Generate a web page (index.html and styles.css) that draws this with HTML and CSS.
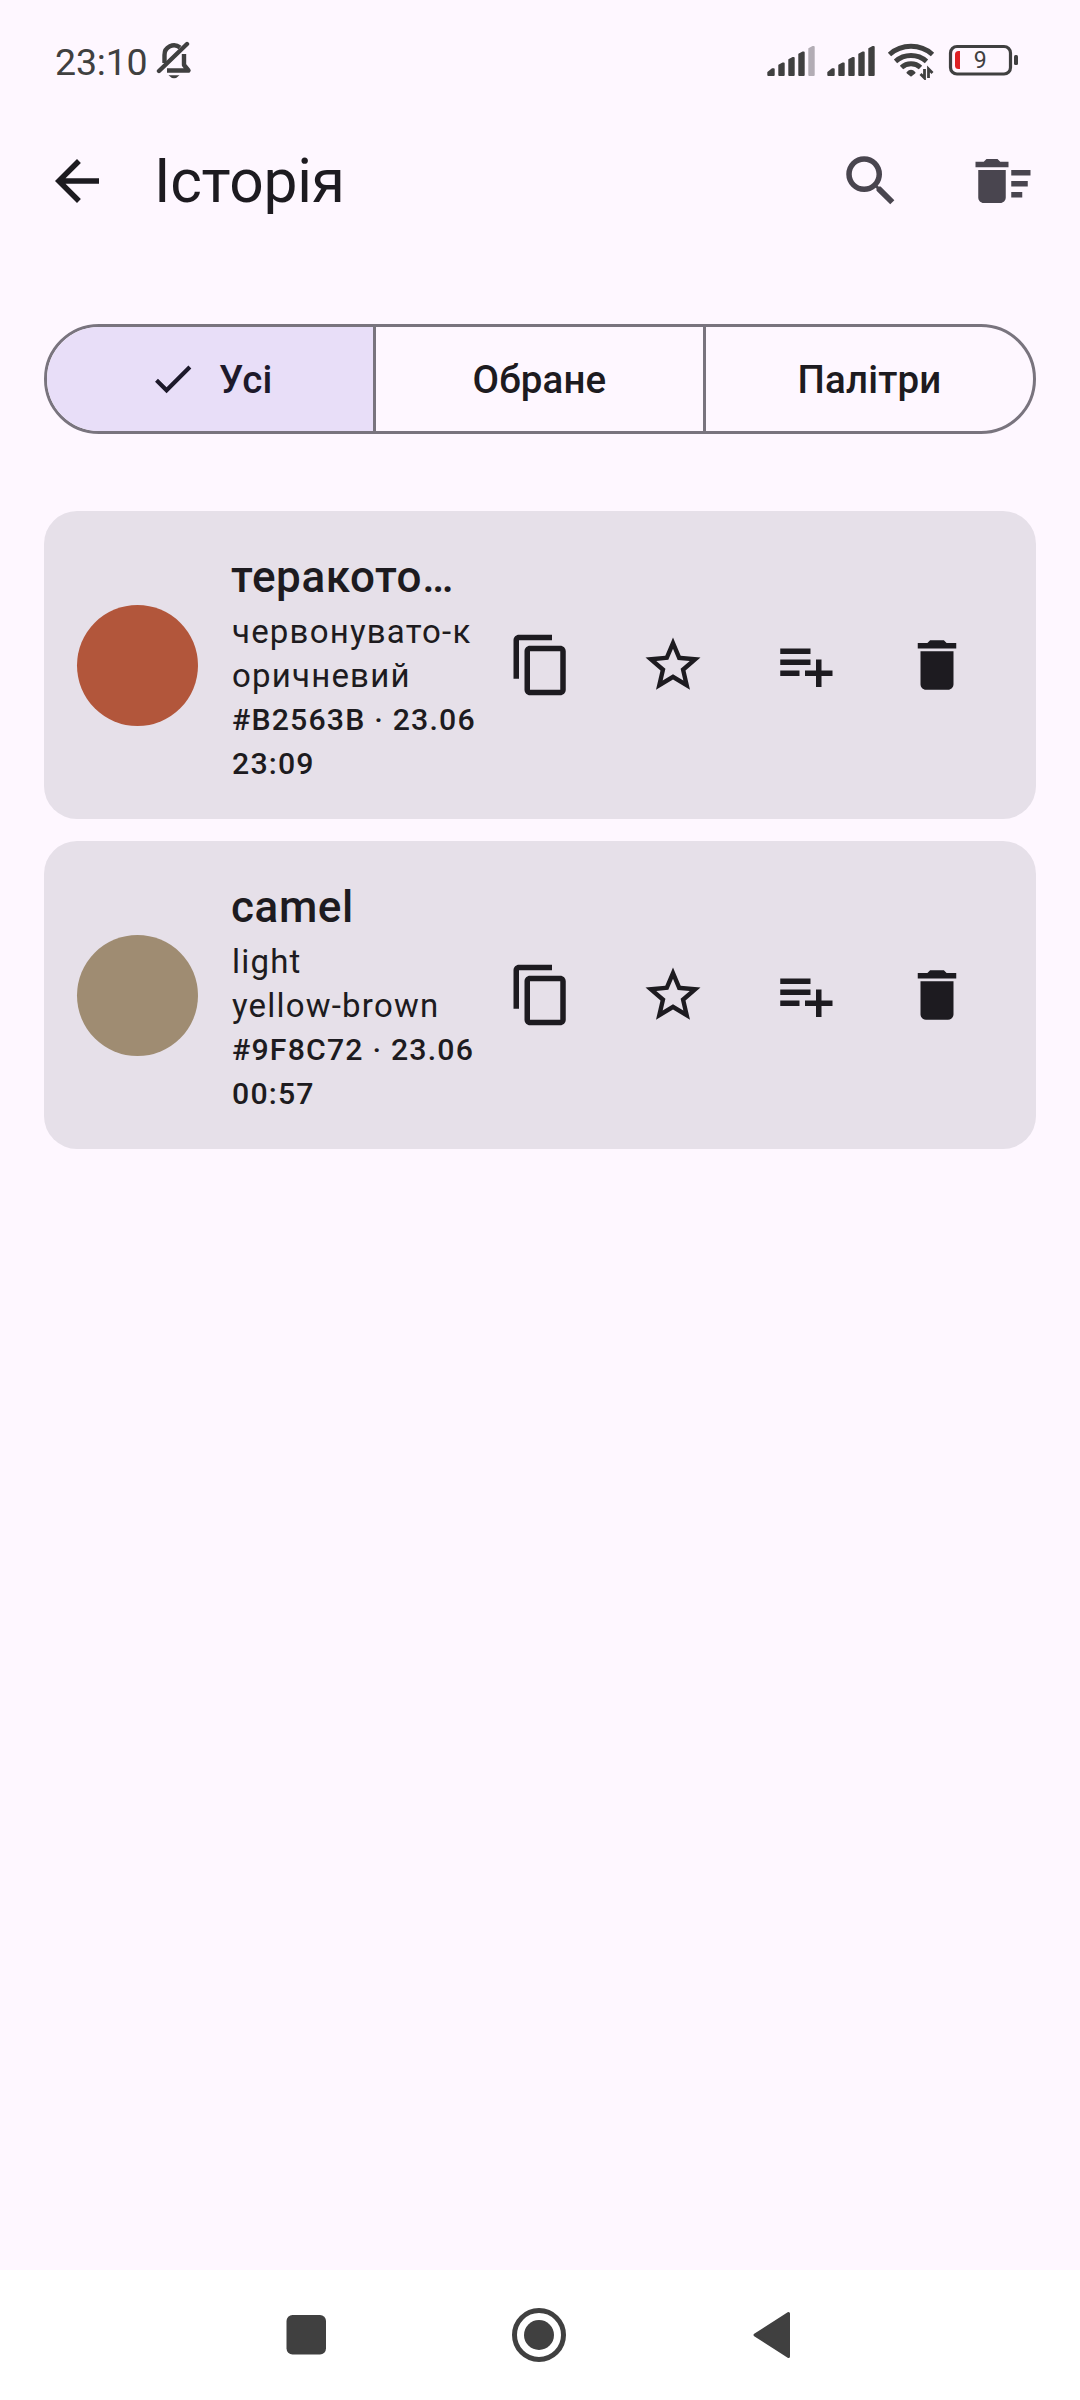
FILE: index.html
```html
<!DOCTYPE html>
<html lang="uk">
<head>
<meta charset="utf-8">
<title>Історія</title>
<link rel="stylesheet" href="styles.css">
</head>
<body>
<svg class="sprite" aria-hidden="true">
  <symbol id="copy" viewBox="0 0 24 24"><path d="M16 1H4c-1.1 0-2 .9-2 2v14h2V3h12V1zm3 4H8c-1.1 0-2 .9-2 2v14c0 1.1.9 2 2 2h11c1.1 0 2-.9 2-2V7c0-1.1-.9-2-2-2zm0 16H8V7h11v14z"/></symbol>
  <symbol id="star" viewBox="0 0 24 24"><path d="M22 9.24l-7.19-.62L12 2 9.19 8.63 2 9.24l5.46 4.73L5.82 21 12 17.27 18.18 21l-1.63-7.03L22 9.24zM12 15.4l-3.76 2.27 1-4.28-3.32-2.88 4.38-.38L12 6.1l1.71 4.04 4.38.38-3.32 2.88 1 4.28L12 15.4z"/></symbol>
  <symbol id="playlist" viewBox="0 0 24 24"><path d="M14 10H3v2h11v-2zm0-4H3v2h11V6zm4 8v-4h-2v4h-4v2h4v4h2v-4h4v-2h-4zM3 16h7v-2H3v2z"/></symbol>
  <symbol id="delete" viewBox="0 0 24 24"><path d="M6 19c0 1.1.9 2 2 2h8c1.1 0 2-.9 2-2V7H6v12zM19 4h-3.500l-1-1h-5l-1 1H5v2h14V4z"/></symbol>
</svg>
<div class="screen">
  <div class="status">
    <span class="clock">23:10</span>
    <svg class="bell" width="36" height="38" viewBox="0 0 36 38"><g fill="none" stroke="#404040" stroke-width="4.400"><path d="M8.500 22V14a9.500 9.500 0 0 1 15.500-7.500"/><path d="M28 13v11l4.500 5.500H11" stroke-linejoin="round"/><path d="M3 30L31 3" stroke-linecap="round"/></g><path d="M12.500 34.300h11q-5.500 6-11 0z" fill="#404040"/></svg>
    <svg class="tray" width="254" height="40" viewBox="766 40 254 40">
      <g fill="#404040" stroke="#404040" stroke-width="2" stroke-linejoin="round">
        <path d="M768.300 75v-2.500l4-3.200h1.400v5.700zM779.300 75V65.300l3.700-1.900h.7V75zM789.300 75V59.800l3.700-1.900h.7V75zM799.300 75V54.300l3.700-1.900h.7V75z"/>
        <path d="M828.300 75v-2.500l4-3.200h1.400v5.700zM839.300 75V65.300l3.700-1.900h.7V75zM849.300 75V59.800l3.700-1.900h.7V75zM859.300 75V54.300l3.700-1.900h.7V75zM869.300 75V48.800l3.700-1.900h.7V75z"/>
        <path d="M911 75.500l-3.500-2.800q3.500-4 7 0z"/>
      </g>
      <path d="M809.300 75V48.800l3.700-1.900h.7V75z" fill="#b3adb5" stroke="#b3adb5" stroke-width="2" stroke-linejoin="round"/>
      <g fill="none" stroke="#404040" stroke-width="5">
        <path d="M889.500 54.500A32.500 32.500 0 0 1 932.500 54.500M895.500 61.300A23.500 23.500 0 0 1 926.500 61.300M901.500 67.500A14 14 0 0 1 920.500 67.500"/>
        <path d="M924.500 69v9l-4-4M928.500 78v-9l4 4" stroke-width="2.800"/>
        <rect x="950.500" y="46.500" width="60" height="27.500" rx="6.500" stroke-width="3.200"/>
      </g>
      <path d="M960 51v18h-1.500a3.500 3.500 0 0 1-3.500-3.500v-11a3.500 3.500 0 0 1 3.500-3.500z" fill="#dd2024"/>
      <rect x="1014" y="55" width="4" height="10" rx="1.500" fill="#404040"/>
      <text class="charge" x="980.300" y="68.300" text-anchor="middle">9</text>
    </svg>
  </div>
  <header class="bar">
    <svg class="icon" viewBox="0 0 24 24"><path d="M20 11H7.830l5.590-5.590L12 4l-8 8 8 8 1.410-1.410L7.830 13H20v-2z"/></svg>
    <h1 class="title">Історія</h1>
    <svg class="icon muted" viewBox="0 0 24 24"><path d="M15.500 14h-.79l-.28-.27A6.471 6.471 0 0 0 16 9.500 6.500 6.500 0 1 0 9.500 16c1.610 0 3.090-.59 4.230-1.570l.27.28v.79l5 4.990L20.490 19l-4.990-5zm-6 0C7.010 14 5 11.990 5 9.500S7.010 5 9.500 5 14 7.010 14 9.500 11.990 14 9.500 14z"/></svg>
    <svg class="icon muted" viewBox="0 0 24 24"><path d="M15 16h4v2h-4zm0-8h7v2h-7zm0 4h6v2h-6zM3 18c0 1.100.9 2 2 2h6c1.100 0 2-.9 2-2V8H3v10zM14 5h-3l-1-1H6L5 5H2v2h12z"/></svg>
  </header>
  <nav class="segments">
    <div class="segment selected"><svg class="check" viewBox="0 0 24 24"><path d="M9 16.170L4.830 12l-1.420 1.410L9 19 21 7l-1.410-1.410z"/></svg>Усі</div>
    <div class="segment">Обране</div>
    <div class="segment">Палітри</div>
  </nav>
  <main class="list">
    <article class="card">
      <div class="swatch terracotta"></div>
      <div class="info">
        <h2 class="name">теракото…</h2>
        <p class="desc">червонувато-к<br>оричневий</p>
        <p class="meta">#B2563B · 23.06<br>23:09</p>
      </div>
      <div class="actions"><svg class="icon"><use href="#copy"/></svg><svg class="icon"><use href="#star"/></svg><svg class="icon"><use href="#playlist"/></svg><svg class="icon"><use href="#delete"/></svg></div>
    </article>
    <article class="card">
      <div class="swatch camel"></div>
      <div class="info">
        <h2 class="name">camel</h2>
        <p class="desc">light<br>yellow-brown</p>
        <p class="meta">#9F8C72 · 23.06<br>00:57</p>
      </div>
      <div class="actions"><svg class="icon"><use href="#copy"/></svg><svg class="icon"><use href="#star"/></svg><svg class="icon"><use href="#playlist"/></svg><svg class="icon"><use href="#delete"/></svg></div>
    </article>
  </main>
  <footer class="sysnav">
    <svg width="504" height="56" viewBox="286 2307 504 56" fill="#404040"><rect x="286.500" y="2315" width="39.500" height="39.500" rx="6"/><circle cx="539" cy="2335" r="24.500" fill="none" stroke="#404040" stroke-width="5"/><circle cx="539" cy="2335" r="15"/><path d="M755 2335L788.500 2313.500V2356.500z" stroke="#404040" stroke-width="3" stroke-linejoin="round"/></svg>
  </footer>
</div>
</body>
</html>
```
FILE: styles.css
```css
* { box-sizing: border-box; margin: 0; }
body { background: #fef7ff; font-family: Roboto, sans-serif; color: #1d1b20; }
.sprite { display: none; }
.screen { width: 1080px; height: 2400px; display: flex; flex-direction: column; }
.status { height: 115px; display: flex; padding: 40px 60px 0 55px; color: #404040; }
.clock { font-size: 37.5px; line-height: 44px; font-weight: 450; letter-spacing: -.2px; width: 101px; white-space: nowrap; }
.bell { margin-top: 1px; }
.tray { margin-left: auto; }
.charge { font-size: 23px; fill: #404040; }
.icon { width: 66px; height: 66px; flex: none; display: block; fill: currentColor; }
.bar { height: 132px; display: flex; align-items: center; padding: 0 44px; }
.title { flex: 1; margin-left: 44px; font-size: 60.5px; font-weight: 400; letter-spacing: -.25px; line-height: 77px; }
.muted { color: #49454f; }
.muted + .muted { margin-left: 66px; }
.segments { margin: 77px 44px 0; height: 110px; border: 3px solid #79747e; border-radius: 55px; display: grid; grid-template-columns: 326px 330px 1fr; overflow: hidden; }
.segment { display: flex; align-items: center; justify-content: center; gap: 22px; font-size: 38.5px; font-weight: 500; letter-spacing: .15px; }
.segment + .segment { border-left: 3px solid #79747e; }
.selected { background: #e8def8; color: #1d192b; }
.check { width: 49.5px; height: 49.5px; fill: currentColor; }
.list { margin: 77px 44px 0; display: flex; flex-direction: column; gap: 22px; flex: 1; }
.card { height: 308px; padding: 33px; border-radius: 33px; background: #e6e0e9; display: flex; align-items: center; }
.swatch { width: 121px; height: 121px; border-radius: 50%; margin-right: 33px; flex: none; }
.terracotta { background: #b2563b; }
.camel { background: #9f8c72; }
.info { width: 243.8px; flex: none; white-space: nowrap; }
.name { font-size: 44px; line-height: 66px; font-weight: 500; letter-spacing: .6px; }
.desc { font-size: 33px; line-height: 44px; letter-spacing: 1.2px; padding-left: 1px; }
.meta { font-size: 30.25px; line-height: 44px; font-weight: 500; letter-spacing: 1.19px; padding-left: 1px; }
.actions { display: flex; gap: 66px; padding-left: 33px; }
.sysnav { height: 130px; background: #fff; display: flex; justify-content: center; align-items: center; padding-right: 4px; }
```
